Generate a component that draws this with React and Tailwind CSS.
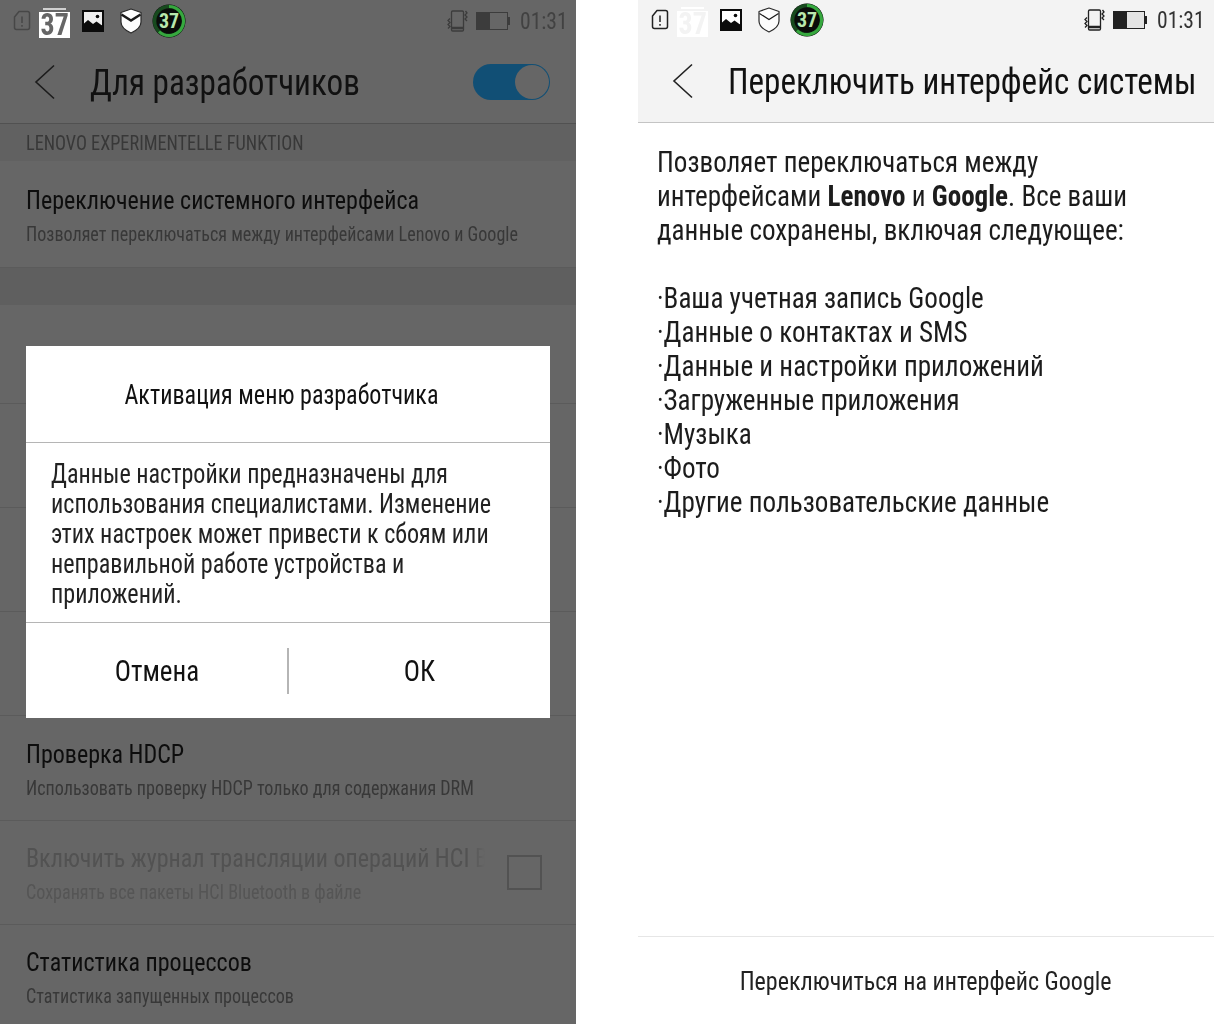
const F = "font-['Roboto','Liberation_Sans',sans-serif] [font-stretch:75%]";
const N = "scale-x-[0.9] origin-left whitespace-nowrap";
const C = "scale-x-[0.9] origin-center whitespace-nowrap";

function Alert({ c }) {
  return (
    <svg width="18" height="21" viewBox="0 0 18 21" fill="none" className="shrink-0">
      <path d="M6 1.500h8.500a2 2 0 0 1 2 2v14a2 2 0 0 1-2 2h-11a2 2 0 0 1-2-2V7z" stroke={c} strokeWidth="1.500" strokeLinejoin="round" />
      <path d="M9 6.500v6.500M9 15v1.800" stroke={c} strokeWidth="1.500" />
    </svg>
  );
}
function Pic({ inner }) {
  return (
    <svg width="22" height="22" viewBox="0 0 22 22" className="shrink-0">
      <rect width="22" height="22" fill="#0b0b0b" />
      <rect x="2" y="2" width="18" height="13.500" fill={inner} />
      <path d="M2 13.500l4-3.500 5 4 3.500-2.500L20 15.500V20H2z" fill="#0b0b0b" />
      <circle cx="15.500" cy="6.500" r="1.800" fill="#0b0b0b" />
    </svg>
  );
}
function Shield({ band }) {
  return (
    <svg width="22" height="26" viewBox="0 0 22 26" className="shrink-0">
      <path d="M1 4.500 11 1l10 3.500V14c0 5-4.500 8.500-10 11C5.500 22.500 1 19 1 14z" fill="#fdfdfd" stroke="#2a2a2a" strokeWidth="1.200" strokeLinejoin="round" />
      <path d="M1.500 6.500 11 12.500l9.500-6" fill="none" stroke="#1a1a1a" strokeWidth={band} />
    </svg>
  );
}
function Ring() {
  return (
    <div className="relative w-[34px] h-[34px] shrink-0 flex items-center justify-center">
      <svg width="34" height="34" viewBox="0 0 34 34" className="absolute inset-0">
        <circle cx="17" cy="17" r="16.500" fill="#0d0f0d" />
        <circle cx="17" cy="17" r="14.500" fill="none" stroke="#174a1e" strokeWidth="3.500" />
        <path d="M17 2.500A14.500 14.500 0 1 1 7 27.500" fill="none" stroke="#37a83f" strokeWidth="3" />
        <circle cx="17" cy="17" r="12" fill="#0a0c0a" />
      </svg>
      <span className="relative text-[20px] font-bold text-[#b9e8ad] leading-none">37</span>
    </div>
  );
}
function Vibe({ c }) {
  return (
    <svg width="21" height="22" viewBox="0 0 21 22" fill="none" stroke={c} strokeWidth="1.300" className="shrink-0">
      <rect x="4.500" y="1" width="12" height="20" rx="1.200" />
      <path d="M4.500 18h12" strokeWidth="2.500" />
      <path d="M3 8.500 1 10.500l2 2-2 2 2 2-2 2" />
      <path d="M18.500 1 20 3l-2 2 2 2-2 2 2 2" />
    </svg>
  );
}
function Battery({ c, fill }) {
  return (
    <div className="flex items-center shrink-0">
      <div className="w-[32px] h-[18px] border-[1.500px] flex" style={{ borderColor: c, background: fill }}>
        <div className="w-[13px] h-full" style={{ background: c }} />
      </div>
      <div className="w-[2px] h-[8px]" style={{ background: c }} />
    </div>
  );
}
function Chevron({ c }) {
  return (
    <svg width="22" height="36" viewBox="0 0 22 36" fill="none" stroke={c} strokeWidth="1.600" className="shrink-0">
      <path d="M20 1.500 2 18l18 16.500" />
    </svg>
  );
}
function Row({ title, sub, muted, h = 'h-[104px]', pt = 'pt-[20px]', check }) {
  return (
    <div className={`${h} ${pt} border-b border-[#5b5b5b] pl-[26px] relative`}>
      {title && (
        <div className={`${N} text-[26.700px] leading-[34px] ${muted ? "text-[#525252] w-[510px] overflow-hidden [mask-image:linear-gradient(to_right,black_96.500%,transparent)]" : 'text-[#0d0d0d]'}`}>{title}</div>
      )}
      {sub && <div className={`${N} text-[20.100px] leading-[34px] ${muted ? 'text-[#555555]' : 'text-[#383838]'}`}>{sub}</div>}
      {check && <div className="absolute left-[507px] top-[34px] w-[35px] h-[35px] border-2 border-[#525252]" />}
    </div>
  );
}
function StatusLeft({ dark, digit, band, inner, tab }) {
  return (
    <>
      <Alert c={dark} />
      <div className="ml-[8px] w-[31px] h-[31px] mt-[3px] shrink-0 flex flex-col">
        <div className="h-[2px] mx-[4px] mt-[1px]" style={{ background: tab }} />
        <div className="h-[2px]" />
        <div className="h-[26px] bg-white flex items-center justify-center">
          <span className={`${C} text-[31px] font-bold leading-none`} style={{ color: digit }}>37</span>
        </div>
      </div>
      <div className="ml-[12px]"><Pic inner={inner} /></div>
      <div className="ml-[16px]"><Shield band={band} /></div>
      <div className="ml-[10px]"><Ring /></div>
    </>
  );
}
function StatusRight({ c, fill, tc, mr }) {
  return (
    <div className={`ml-auto flex items-center ${mr}`}>
      <Vibe c={c} />
      <div className="ml-[8px]"><Battery c={c} fill={fill} /></div>
      <div className="w-[55px] ml-[9px] pl-[1px]">
        <div className={`${N} text-[24px]`} style={{ color: tc }}>01:31</div>
      </div>
    </div>
  );
}

export default function App() {
  return (
    <div className={`${F} w-[1219px] h-[1024px] bg-white flex overflow-hidden`}>
      <div className="w-[576px] h-[1024px] bg-[#666666] relative overflow-hidden shrink-0">
        <div className="h-[41px] flex items-center pl-[13px]">
          <StatusLeft dark="#474747" digit="#666666" band={2.500} inner="#f0f0f0" tab="#d0d0d0" />
          <StatusRight c="#3c3c3c" tc="#424242" mr="mr-[2px]" />
        </div>
        <div className="h-[83px] border-b border-[#515151] flex items-center pl-[34px] pr-[26px]">
          <Chevron c="#1c1c1c" />
          <div className="ml-[34px] w-[320px] shrink-0">
            <div className={`${N} text-[36.800px] leading-[44px] text-[#111] pt-[2px]`}>Для разработчиков</div>
          </div>
          <div className="ml-auto w-[77px] h-[36px] rounded-full bg-[#114f75] relative">
            <div className="absolute right-[1px] top-[1px] w-[34px] h-[34px] rounded-full bg-[#666666]" />
          </div>
        </div>
        <div className="h-[37px] bg-[#616161] pl-[26px]">
          <div className={`${N} text-[20.300px] leading-[39px] text-[#383838]`}>LENOVO EXPERIMENTELLE FUNKTION</div>
        </div>
        <Row title="Переключение системного интерфейса" sub="Позволяет переключаться между интерфейсами Lenovo и Google" h="h-[107px]" pt="pt-[22px]" />
        <div className="h-[37px] bg-[#5f5f5f]" />
        <Row h="h-[99px]" />
        <Row />
        <Row />
        <Row />
        <Row title="Проверка HDCP" sub="Использовать проверку HDCP только для содержания DRM" h="h-[105px]" pt="pt-[21px]" />
        <Row title="Включить журнал трансляции операций HCI Bluetooth" sub="Сохранять все пакеты HCI Bluetooth в файле" muted check />
        <Row title="Статистика процессов" sub="Статистика запущенных процессов" />

        <div className="absolute left-[26px] top-[346px] w-[524px] h-[372px] bg-white flex flex-col">
          <div className="h-[97px] shrink-0 border-b border-[#b5b5b5] flex items-center justify-center pr-[14px]">
            <div className={`${C} text-[26.800px] text-[#111] mt-[2px]`}>Активация меню разработчика</div>
          </div>
          <div className="h-[180px] shrink-0 border-b border-[#b5b5b5] pl-[25px] pt-[16px] text-[26.800px] leading-[30px] text-[#222]">
            <div className={N}>Данные настройки предназначены для</div>
            <div className={N}>использования специалистами. Изменение</div>
            <div className={N}>этих настроек может привести к сбоям или</div>
            <div className={N}>неправильной работе устройства и</div>
            <div className={N}>приложений.</div>
          </div>
          <div className="flex-1 flex items-center text-[30px] text-[#111]">
            <div className="w-[261px] flex justify-center"><div className={C}>Отмена</div></div>
            <div className="w-[2px] h-[46px] bg-[#b5b5b5]" />
            <div className="flex-1 flex justify-center"><div className={C}>ОК</div></div>
          </div>
        </div>
      </div>

      <div className="ml-[62px] w-[576px] h-[1024px] bg-white flex flex-col shrink-0">
        <div className="bg-[#f3f3f3] border-b border-[#c4c4c4] h-[123px] shrink-0">
          <div className="h-[39px] flex items-center pl-[13px]">
            <StatusLeft dark="#222222" digit="#f3f3f3" band={1.200} inner="#ffffff" tab="#ffffff" />
            <StatusRight c="#222222" fill="#e4e4e4" tc="#333333" mr="mr-[3px]" />
          </div>
          <div className="h-[83px] flex items-center pl-[34px]">
            <Chevron c="#222222" />
            <div className="ml-[34px] w-[500px] shrink-0">
              <div className={`${N} text-[36.800px] leading-[44px] text-[#111] pt-[2px]`}>Переключить интерфейс системы</div>
            </div>
          </div>
        </div>
        <div className="flex-1 pl-[19px] pt-[22px] text-[30.100px] leading-[34px] text-[#1c1c1c]">
          <p className={N}>Позволяет переключаться между</p>
          <p className={N}>интерфейсами <b>Lenovo</b> и <b>Google</b>. Все ваши</p>
          <p className={N}>данные сохранены, включая следующее:</p>
          <p className="h-[34px]" />
          <p className={N}>·Ваша учетная запись Google</p>
          <p className={N}>·Данные о контактах и SMS</p>
          <p className={N}>·Данные и настройки приложений</p>
          <p className={N}>·Загруженные приложения</p>
          <p className={N}>·Музыка</p>
          <p className={N}>·Фото</p>
          <p className={N}>·Другие пользовательские данные</p>
        </div>
        <div className="h-[88px] shrink-0 border-t border-[#e6e6e6] flex items-center justify-center pt-[2px]">
          <div className={`${C} text-[26.700px] text-[#222]`}>Переключиться на интерфейс Google</div>
        </div>
      </div>
    </div>
  );
}
